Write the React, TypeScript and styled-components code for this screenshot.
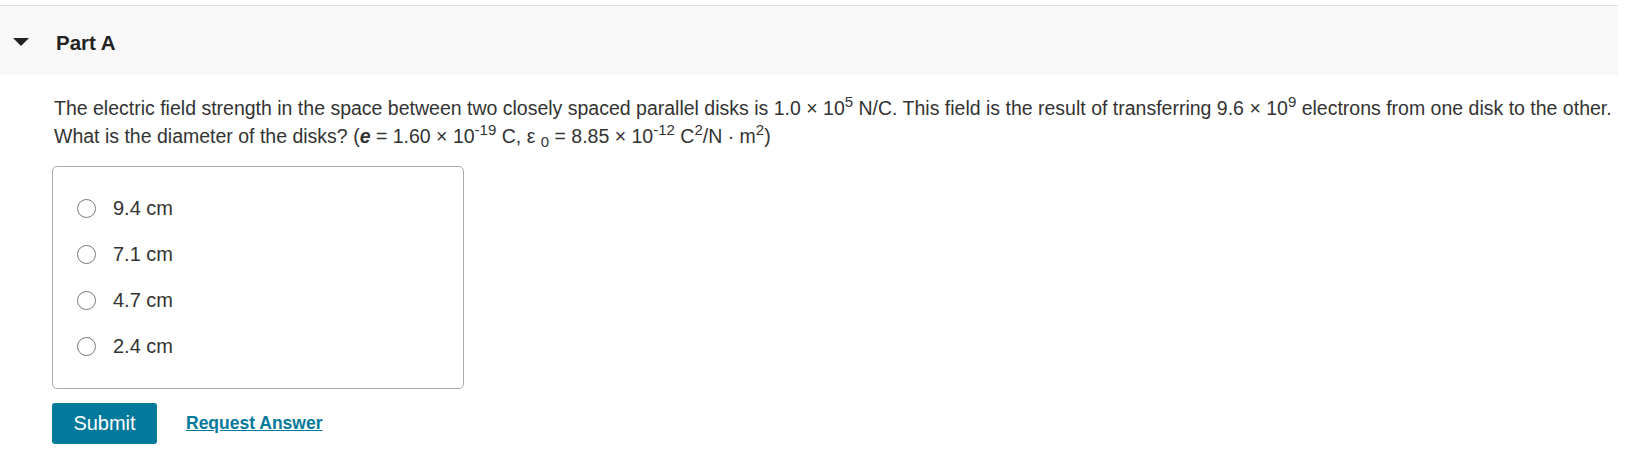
import styled, { createGlobalStyle } from 'styled-components'

const GlobalStyle = createGlobalStyle`
  body {
    margin: 0;
    background: #fff;
    font-family: "Liberation Sans", Arial, sans-serif;
    color: #333;
  }
`

// Outer page, leaves a thin strip above the part header
const Page = styled.div`
  width: 1618px;
  padding-top: 5px;
`

// Collapsible "Part A" header
const PartHeader = styled.div`
  display: flex;
  align-items: center;
  height: 69px;
  padding-left: 13px;
  background-color: #f8f8f8;
  border-top: 1px solid #e0e0e0;
`

const Caret = styled.span`
  width: 0;
  height: 0;
  margin-top: 2px;
  margin-right: 27px;
  border-left: 8px solid transparent;
  border-right: 8px solid transparent;
  border-top: 8px solid #222;
`

const PartTitle = styled.h2`
  margin: 4px 0 0;
  font-size: 20.5px;
  font-weight: bold;
  color: #222;
`

const Body = styled.div`
  padding: 19px 0 0 52px;
`

const Question = styled.p`
  margin: 0 0 16px 2px;
  font-size: 19.5px;
  line-height: 28px;
  color: #333;
  sup,
  sub {
    font-size: 15px;
    line-height: 0;
  }
  sup {
    vertical-align: 8px;
  }
  sub {
    vertical-align: -4px;
  }
  em {
    font-weight: 600;
  }
`

// Box with the answer choices
const Choices = styled.div`
  box-sizing: border-box;
  width: 412px;
  padding: 18px 0 19px 24px;
  border: 1px solid #aaa;
  border-radius: 5px;
`

const Choice = styled.label`
  display: flex;
  align-items: center;
  height: 46px;
  font-size: 20px;
  color: #333;
  cursor: pointer;
`

const Radio = styled.input.attrs({ type: 'radio' })`
  appearance: none;
  box-sizing: border-box;
  width: 19px;
  height: 19px;
  margin: 0 17px 0 0;
  border: 1px solid #7a7a7a;
  border-radius: 50%;
  background: #fff;
`

const Actions = styled.div`
  display: flex;
  align-items: center;
  margin-top: 14px;
`

const SubmitButton = styled.button`
  width: 105px;
  height: 41px;
  padding: 0;
  border: none;
  border-radius: 3px;
  background-color: #03799c;
  color: #fff;
  font-family: "Liberation Sans", Arial, sans-serif;
  font-size: 20px;
`

const RequestLink = styled.a`
  margin-left: 29px;
  color: #03799c;
  font-size: 17.5px;
  font-weight: bold;
  text-decoration: underline;
  cursor: pointer;
`

const answers = ['9.4 cm', '7.1 cm', '4.7 cm', '2.4 cm']

export default function App() {
  return (
    <Page>
      <GlobalStyle />
      <PartHeader>
        <Caret />
        <PartTitle>Part A</PartTitle>
      </PartHeader>
      <Body>
        <Question>
          The electric field strength in the space between two closely spaced parallel disks is 1.0 × 10
          <sup>5</sup> N/C. This field is the result of transferring 9.6 × 10<sup>9</sup> electrons from
          one disk to the other. What is the diameter of the disks? (<em>e</em> = 1.60 × 10<sup>-19</sup> C,{' '}
          ε <sub>0</sub> = 8.85 × 10<sup>-12</sup> C<sup>2</sup>/N · m<sup>2</sup>)
        </Question>
        <Choices>
          {answers.map(a => (
            <Choice key={a}>
              <Radio name="partA" />
              {a}
            </Choice>
          ))}
        </Choices>
        <Actions>
          <SubmitButton>Submit</SubmitButton>
          <RequestLink>Request Answer</RequestLink>
        </Actions>
      </Body>
    </Page>
  )
}
